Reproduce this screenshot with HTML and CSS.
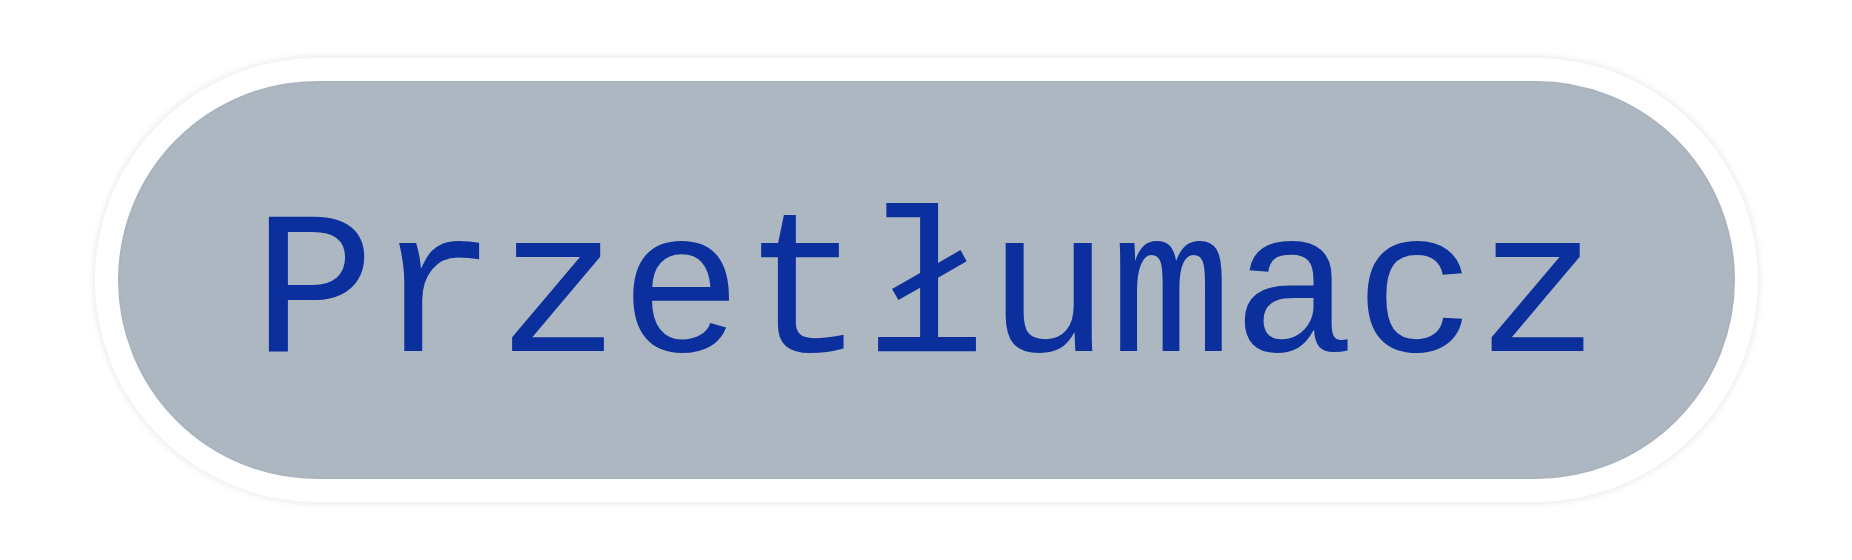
FILE: index.html
```html
<!DOCTYPE html>
<html>
  <head>
    <title>Tłumacz</title>
    <link rel="stylesheet" href="styles.css">
  </head>
  <body>
    <div class="stage">
      <button class="translate-button">Przetłumacz</button>
    </div>
  </body>
</html>
```

FILE: styles.css
```css
html,
body {
  margin: 0;
  height: 100%;
  background-color: #fff;
}

.stage {
  height: 100%;
  display: flex;
  justify-content: center;
  align-items: center;
}

.translate-button {
  width: 1617px;
  height: 398px;
  border: 2px solid #a9b4bf;
  border-radius: 199px;
  background-color: #acb7c1;
  color: #0b2f9c;
  font-family: "Liberation Mono", "Courier New", monospace;
  font-size: 204px;
  padding: 32px 0 0;
  box-shadow: 0 0 0 23px #fff, 0 0 6px 25px #e9edf2;
  cursor: pointer;
}
```
